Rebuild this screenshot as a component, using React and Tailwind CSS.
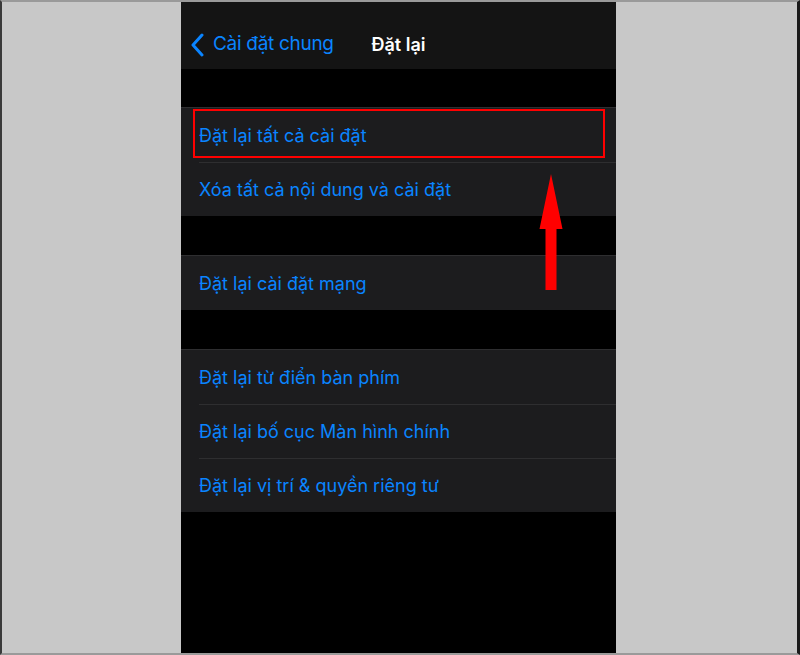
import React from "react";

const groups = [
  ["Đặt lại tất cả cài đặt", "Xóa tất cả nội dung và cài đặt"],
  ["Đặt lại cài đặt mạng"],
  [
    "Đặt lại từ điển bàn phím",
    "Đặt lại bố cục Màn hình chính",
    "Đặt lại vị trí & quyền riêng tư",
  ],
];

function Row({ label, first, highlight }) {
  return (
    <div className="relative h-[54px] flex items-center pl-[18px]">
      {!first && (
        <div className="absolute top-0 left-[18px] right-0 h-px bg-[#2e2e30]" />
      )}
      <span className="text-[18px] text-[#0a84ff]">{label}</span>
      {highlight && (
        <div className="absolute left-[12px] right-[11px] top-[1px] bottom-[4px] border-2 border-[#ff0000]" />
      )}
    </div>
  );
}

export default function App() {
  return (
    <div
      className="relative w-[800px] h-[655px] bg-[#c8c8c8] flex border-t-2 border-b-2 border-l-2 border-r-[3px] border-t-[#9a9a9a] border-b-[#9a9a9a] border-l-[#3a3a3a] border-r-[#1a1a1a] overflow-hidden"
      style={{ fontFamily: "Inter, 'Noto Sans', sans-serif" }}
    >
      <div className="ml-[179px] w-[435px] h-full bg-black flex flex-col">
        <div className="relative h-[67px] bg-[#141414] flex items-center pt-[18px]">
          <div className="flex items-center pl-[9px]">
            <svg width="15" height="24" viewBox="0 0 15 24" fill="none">
              <path
                d="M12 2L3 12l9 10"
                stroke="#0a84ff"
                strokeWidth="3"
                strokeLinecap="round"
                strokeLinejoin="round"
              />
            </svg>
            <span className="ml-[8px] text-[19px] text-[#0a84ff] tracking-[-0.3px]">
              Cài đặt chung
            </span>
          </div>
          <div className="absolute inset-0 flex items-center justify-center pt-[18px] pointer-events-none">
            <span className="text-[18px] font-semibold text-white">Đặt lại</span>
          </div>
        </div>
        <div className="flex flex-col gap-[39px] pt-[38px]">
          {groups.map((g, gi) => (
            <div key={gi} className="bg-[#1c1c1e] border-t border-[#2e2e30]">
              {g.map((label, i) => (
                <Row
                  key={label}
                  label={label}
                  first={i === 0}
                  highlight={gi === 0 && i === 0}
                />
              ))}
            </div>
          ))}
        </div>
      </div>
      <svg
        className="absolute left-[535px] top-[170px]"
        width="30"
        height="122"
        viewBox="0 0 30 122"
      >
        <polygon points="14,2 25.5,57 19.5,57 19.5,118 8.5,118 8.5,57 2.5,57" fill="#ff0000" />
      </svg>
    </div>
  );
}
